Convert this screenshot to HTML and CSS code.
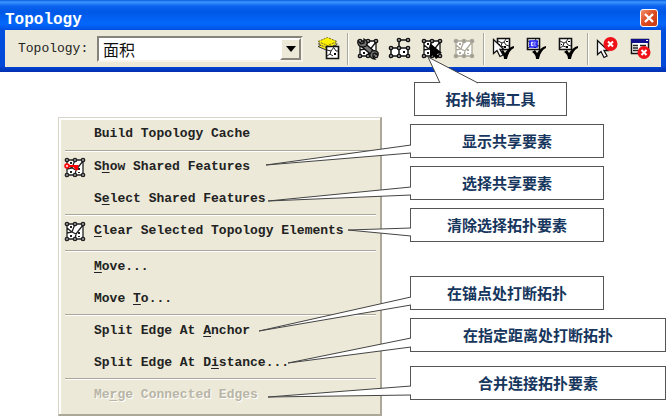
FILE: index.html
```html
<!DOCTYPE html>
<html lang="zh-CN">
<head>
<meta charset="utf-8">
<title>Topology</title>
<link rel="stylesheet" href="styles.css">
</head>
<body>
<svg class="defs" aria-hidden="true">
  <symbol id="topo" viewBox="0 0 24 24">
    <path fill="#fff" stroke="none" d="M4 4h16v15H4z"/>
    <path d="M4 4h16v15H4zM4 13l5-1 3-8M9 12l4 2 7-9M13 14l-1 5M9 12l-5-4" fill="none" stroke="currentColor" stroke-width="1.3"/>
    <path d="M15 12h2v2h-2zM7 15h2v2H7zM15 16h2v1h-2zM7 6h2v2H7z" fill="currentColor"/>
    <g fill="#999" stroke="currentColor" stroke-width="1.3"><circle cx="4" cy="4" r="1.7"/><circle cx="12" cy="4" r="1.7"/><circle cx="20" cy="4" r="1.7"/><circle cx="4" cy="19" r="1.7"/><circle cx="12" cy="19" r="1.7"/><circle cx="20" cy="19" r="1.7"/></g>
  </symbol>
  <symbol id="check" viewBox="0 0 24 24"><path d="M8 15l3-2 2 3c2-3 5-6 9-7v2c-4 2-6 6-7 11h-3c0-3-1-5-4-7z" fill="#000"/></symbol>
  <symbol id="sheet" viewBox="0 0 24 24">
    <path d="M3.500 1.500h12v11h-12z" fill="#fff" stroke="#111" stroke-width="1.600"/>
    <path d="M4 4l4 2 2-1 2-3M8 6l-1 3-3 2M10 5l2 3 3 1M7 9l3 1" fill="none" stroke="#222"/><path d="M12 4h2v1h-2zM10 9h2v2h-2zM5 7h1v1H5z"/>
  </symbol>
  <symbol id="arrow" viewBox="0 0 24 24"><path d="M1.500 3.500v14l3.500-3 3 6 3-1.500-3-5.500h4z" fill="#fff" stroke="#111" stroke-width="1.300"/></symbol>
</svg>

<header class="toolbar">
  <div class="titlebar">
    <h1>Topology</h1>
    <button class="close" aria-label="Close"><svg viewBox="0 0 16 16"><path d="M4 4l8 8M12 4l-8 8" stroke="#fff" stroke-width="2.400"/></svg></button>
  </div>
  <div class="tools">
    <label for="layer">Topology:</label>
    <div class="combo">
      <select id="layer"><option>面积</option></select>
      <span class="drop"></span>
    </div>
    <button class="tool" aria-label="Map topology"><svg viewBox="0 0 24 24">
      <path d="M2 9.500l9.500-4 10 4-10 4z" fill="#ffef19" stroke="#333"/>
      <path d="M2 7l9.500-4 10 4-10 4z" fill="#ffef19" stroke="#555" stroke-dasharray="2 1"/>
      <path d="M2 4.500l9.500-4 9.500 4-9.500 4z" fill="#fff200" stroke="#776d10" stroke-dasharray="2 1"/>
      <path d="M10.500 9.500h12v12h-12z" fill="#fff" stroke="#111" stroke-width="1.600"/>
      <path d="M11 13l4 1 3-4M15 14l-1 3-3 2M18 11l2 3 2 0M14 17l3 2" fill="none" stroke="#222"/><path d="M18 16h2v2h-2z"/>
    </svg></button>
    <span class="divider"></span>
    <button class="tool" aria-label="Construct features"><svg viewBox="0 0 24 24">
      <use href="#topo"/>
      <path d="M5 6l14 12" stroke="#111" stroke-width="6"/><path d="M5 6l14 12" stroke="#777" stroke-width="3"/>
      <path d="M2 4l3 3 3-1V2c3 1 4 4 2 7l-3 1C3 10 1 7 2 4zM22 18l-3-2-2 1v3l2 2c-3 0-6-2-5-5l2-3c4-1 7 1 6 4z" fill="#777" stroke="#111" stroke-width="1.300"/>
    </svg></button>
    <button class="tool" aria-label="Planarize lines"><svg viewBox="0 0 24 24">
      <path d="M3 11h17v8H3z" fill="#fff"/><path d="M3 11h17v8H3zM11 19V3h9" fill="none" stroke="#111" stroke-width="1.500"/><path d="M15 14h2v2h-2z"/>
      <g fill="#999" stroke="#111" stroke-width="1.300"><circle cx="11" cy="3" r="1.700"/><circle cx="20" cy="3" r="1.700"/><circle cx="3" cy="11" r="1.700"/><circle cx="11" cy="11" r="1.700"/><circle cx="20" cy="11" r="1.700"/><circle cx="3" cy="19" r="1.700"/><circle cx="11" cy="19" r="1.700"/><circle cx="20" cy="19" r="1.700"/></g>
    </svg></button>
    <button class="tool" aria-label="Topology edit tool"><svg viewBox="0 0 24 24"><use href="#topo"/><path d="M10 6v15l3-3 3 4 3-2-2-3 5-1z" fill="#000"/></svg></button>
    <button class="tool off" aria-label="Show shared features" disabled><svg viewBox="0 0 24 24"><use href="#topo"/></svg></button>
    <span class="divider"></span>
    <button class="tool" aria-label="Validate selected area"><svg viewBox="0 0 24 24"><use href="#sheet" x="2"/><use href="#check"/><use href="#arrow" y="-1"/></svg></button>
    <button class="tool" aria-label="Validate current extent"><svg viewBox="0 0 24 24"><use href="#sheet"/><path d="M6 4h7v6H6z" fill="#ddf" stroke="#1818f0" stroke-width="1.600"/><path d="M9 6h3v2H9z" fill="#fff" stroke="#1818f0"/><use href="#check"/></svg></button>
    <button class="tool" aria-label="Validate entire topology"><svg viewBox="0 0 24 24"><use href="#sheet"/><use href="#check"/></svg></button>
    <span class="divider"></span>
    <button class="tool" aria-label="Fix topology error"><svg viewBox="0 0 24 24"><use href="#arrow"/><circle cx="14.500" cy="7" r="7" fill="#f01018"/><path d="M12 4.500l5 5M17 4.500l-5 5" stroke="#fff" stroke-width="2"/></svg></button>
    <button class="tool" aria-label="Error inspector"><svg viewBox="0 0 24 24"><path d="M3.500 2.500h17v14h-17z" fill="#fff" stroke="#111" stroke-width="1.500"/><path d="M3 2h18v4H3z" fill="#10108c"/><path d="M18 3h2v1h-2z" fill="#fff"/><path d="M5 8.500h5M12 8.500h6M5 11h5M5 13.500h5" stroke="#222" stroke-width="1.400"/><circle cx="16" cy="15.500" r="6.500" fill="#f01018"/><path d="M13.500 13l5 5M18.500 13l-5 5" stroke="#fff" stroke-width="2"/></svg></button>
  </div>
</header>

<main class="stage">
  <nav class="menu" aria-label="Topology menu">
    <div class="group"><button>Build Topology Cache</button></div>
    <div class="group">
      <button><svg class="mark" viewBox="0 0 24 24"><use href="#topo"/><path d="M4 10h9M12 10l3 4" stroke="#f00" stroke-width="1.800"/><circle cx="4" cy="10" r="2" fill="#fbb" stroke="#f00" stroke-width="1.500"/><path d="M9 9h7l-3 6z" fill="#f00"/></svg>S<u>h</u>ow Shared Features</button>
      <button>S<u>e</u>lect Shared Features</button>
    </div>
    <div class="group tall"><button><svg class="mark" viewBox="0 0 24 24"><use href="#topo"/></svg><u>C</u>lear Selected Topology Elements</button></div>
    <div class="group"><button><u>M</u>ove...</button><button>Move <u>T</u>o...</button></div>
    <div class="group"><button>Split Edge At <u>A</u>nchor</button><button>Split Edge At D<u>i</u>stance...</button></div>
    <div class="group"><button disabled>Me<u>r</u>ge Connected Edges</button></div>
  </nav>
  <section class="notes">
    <p class="note small">拓扑编辑工具<svg class="tail"><path d="M26 1L14-25L64 1"/></svg></p>
    <p class="note">显示共享要素<svg class="tail"><path d="M1 21L-144 41L1 29"/></svg></p>
    <p class="note">选择共享要素<svg class="tail"><path d="M1 21L-142 35L1 29"/></svg></p>
    <p class="note">清除选择拓扑要素<svg class="tail"><path d="M1 20L-62 22L1 28"/></svg></p>
    <p class="note apart">在锚点处打断拓扑<svg class="tail"><path d="M1 21L-151 55L1 29"/></svg></p>
    <p class="note wide">在指定距离处打断拓扑<svg class="tail"><path d="M1 20L-122 45L1 29"/></svg></p>
    <p class="note wide last">合并连接拓扑要素<svg class="tail"><path d="M1 20L-142 31L1 29"/></svg></p>
  </section>
</main>
</body>
</html>
```
FILE: styles.css
```css
* { box-sizing: border-box; }
body {
  margin: 0;
  background: #fff;
  color: #222;
  font: bold 13px/16px "Liberation Mono", "Noto Sans CJK SC", monospace;
}
button {
  font: inherit;
  color: inherit;
  border: 0;
  padding: 0;
  background: none;
}
.defs { position: absolute; width: 0; height: 0; }

.toolbar {
  padding: 0 5px 5px;
  background: linear-gradient(#0a5be0 0, #3c97ff 2px, #0a63ee 6px, #0058e6 12px, #0468fc 24px, #0050e0 30px, #0048d8 66px, #0030b0 72px);
}
.titlebar {
  display: flex;
  align-items: center;
  justify-content: space-between;
  height: 30px;
  padding: 5px 3px 0 0;
}
h1 {
  margin: 0;
  padding-top: 4px;
  color: #fff;
  font-size: 16px;
  line-height: 20px;
}
.close {
  width: 18px;
  height: 18px;
  border: 1px solid #fff;
  border-radius: 3px;
  background: linear-gradient(135deg, #f0906c, #dc4a20 50%, #c83a10);
}
.close svg { display: block; width: 16px; height: 16px; }
.tools {
  display: flex;
  align-items: center;
  height: 37px;
  padding: 0 5px 0 13px;
  background: #ece9d8;
}
.tools label { width: 79px; font-weight: normal; }
.combo { position: relative; width: 206px; margin-right: auto; }
.combo select {
  display: block;
  width: 100%;
  height: 26px;
  padding: 0 4px;
  appearance: none;
  border: 2px solid;
  border-color: #85837a #f6f4ea #f6f4ea #85837a;
  border-radius: 0;
  background: #fff;
  color: #111;
  font: 16px/20px "Noto Sans CJK SC", sans-serif;
}
.drop {
  position: absolute;
  top: 2px;
  right: 2px;
  display: grid;
  place-items: center;
  width: 21px;
  height: 22px;
  border: 2px solid;
  border-color: #fff #8a887c #8a887c #fff;
  background: #ece9d8;
  pointer-events: none;
}
.drop::before {
  content: "";
  border: 5px solid transparent;
  border-top: 6px solid #000;
  border-bottom: 0;
}
.tool {
  display: grid;
  place-items: center;
  width: 32px;
  height: 24px;
  color: #111;
}
.tool svg { width: 24px; height: 24px; }
.tool.off { color: #aca899; }
.divider {
  width: 8px;
  height: 32px;
  background: linear-gradient(90deg, transparent 3px, #aca899 3px, #aca899 4px, #fff 4px, #fff 5px, transparent 5px);
}

.stage {
  display: flex;
  align-items: flex-start;
  gap: 28px;
  padding: 10px 0 0 58px;
}
.menu {
  width: 324px;
  margin-top: 35px;
  padding: 0 4px 4px 6px;
  border: 1px solid #d8d5c8;
  border-right: 2px solid #aca899;
  border-bottom: 2px solid #aca899;
  background: #ece9d8;
  box-shadow: inset 2px 2px #fff;
}
.group + .group {
  border-top: 1px solid #aca899;
  box-shadow: inset 0 1px #fff;
  margin-bottom: -1px;
}
.group.tall { padding-bottom: 4px; }
.menu button {
  position: relative;
  display: block;
  width: 100%;
  height: 32px;
  padding-left: 29px;
  text-align: left;
  white-space: nowrap;
}
.menu button:disabled { color: #b8b5a6; text-shadow: 1px 1px #fff; }
.menu u { text-underline-offset: 2px; }
.mark {
  position: absolute;
  top: 5px;
  left: -2px;
  width: 24px;
  height: 24px;
}

.notes {
  flex: 1;
  display: flex;
  flex-direction: column;
  gap: 8px;
}
.note {
  position: relative;
  width: 194px;
  margin: 0;
  padding: 6px 0;
  border: 1px solid #555;
  background: #fff;
  color: #17365d;
  font: bold 15px/20px "Noto Sans CJK SC", sans-serif;
  text-align: center;
}
.note.small { width: 153px; margin-left: 4px; }
.note.apart { margin-top: 26px; }
.note.wide { width: 100%; }
.note.last { margin-top: 6px; }
.tail {
  position: absolute;
  top: -1px;
  left: -1px;
  width: 1px;
  height: 1px;
  overflow: visible;
  fill: #fff;
  stroke: #444;
  pointer-events: none;
}
```
